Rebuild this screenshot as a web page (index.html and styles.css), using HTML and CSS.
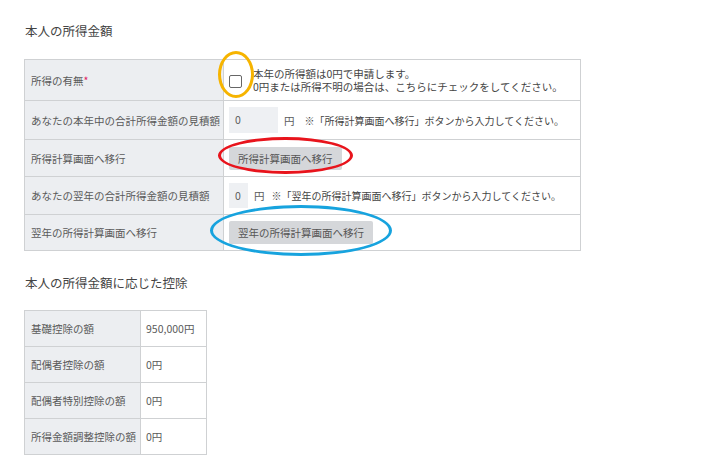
FILE: index.html
```html
<!DOCTYPE html>
<html lang="ja">
<head>
    <meta charset="UTF-8">
    <meta name="viewport" content="width=device-width, initial-scale=1.0">
    <title>本人の所得金額</title>
    <link rel="stylesheet" href="styles.css">
</head>
<body>
    <div class="page">
        <h2 class="section-title">本人の所得金額</h2>
        <table class="form-table income">
            <colgroup>
                <col class="label-col">
                <col>
            </colgroup>
            <tr class="row-check">
                <th>所得の有無<span class="required">*</span></th>
                <td>
                    <div class="check-line">
                        <span class="mark mark-yellow"><input type="checkbox" class="check"></span>
                        <p class="check-text">本年の所得額は0円で申請します。<br>0円または所得不明の場合は、こちらにチェックをしてください。</p>
                    </div>
                </td>
            </tr>
            <tr class="row-input">
                <th>あなたの本年中の合計所得金額の見積額</th>
                <td>
                    <div class="amount-line">
                        <span class="amount wide">0</span>
                        <span class="unit">円</span>
                        <span class="note">※「所得計算画面へ移行」ボタンから入力してください。</span>
                    </div>
                </td>
            </tr>
            <tr class="row-btn">
                <th>所得計算画面へ移行</th>
                <td><span class="mark mark-red"><button class="btn">所得計算画面へ移行</button></span></td>
            </tr>
            <tr class="row-input next">
                <th>あなたの翌年の合計所得金額の見積額</th>
                <td>
                    <div class="amount-line">
                        <span class="amount">0</span>
                        <span class="unit">円</span>
                        <span class="note">※「翌年の所得計算画面へ移行」ボタンから入力してください。</span>
                    </div>
                </td>
            </tr>
            <tr class="row-btn last">
                <th>翌年の所得計算画面へ移行</th>
                <td><span class="mark mark-blue"><button class="btn">翌年の所得計算画面へ移行</button></span></td>
            </tr>
        </table>

        <h2 class="section-title second">本人の所得金額に応じた控除</h2>
        <table class="form-table deduction">
            <colgroup>
                <col class="label-col">
                <col>
            </colgroup>
            <tr><th>基礎控除の額</th><td>950,000円</td></tr>
            <tr><th>配偶者控除の額</th><td>0円</td></tr>
            <tr><th>配偶者特別控除の額</th><td>0円</td></tr>
            <tr><th>所得金額調整控除の額</th><td>0円</td></tr>
        </table>
    </div>
</body>
</html>
```

FILE: styles.css
```css
:root {
    --border-color: #cfd1d3;
    --label-bg: #eceef1;
    --text-color: #5a5a5a;
}

body {
    margin: 0;
    background-color: #fff;
    color: var(--text-color);
    font-family: "Noto Sans CJK JP", "Noto Sans", sans-serif;
    font-size: 10.5px;
}

.page {
    padding: 22px 24px 0;
}

.section-title {
    margin: 0 0 19px 1px;
    font-size: 12.5px;
    font-weight: normal;
    line-height: 18px;
    color: #444;
}
.section-title.second {
    margin-top: 23px;
    margin-bottom: 18px;
}

.form-table {
    border-collapse: collapse;
    table-layout: fixed;
}
.form-table th,
.form-table td {
    border: 1px solid var(--border-color);
    padding: 0 5px;
    text-align: left;
    font-weight: normal;
    vertical-align: middle;
    white-space: nowrap;
    overflow: visible;
}
.form-table th {
    background-color: var(--label-bg);
    padding-left: 6px;
}

.income {
    width: 557px;
}
.income .label-col {
    width: 199px;
}
.row-check th, .row-check td { height: 40px; }
.row-input th, .row-input td { height: 38px; }
.row-input.next th, .row-input.next td { height: 37px; }
.row-btn th, .row-btn td { height: 36px; }
.row-btn.last th, .row-btn.last td { height: 35px; }

.required {
    color: #e0245e;
}

.check-line {
    display: flex;
    align-items: center;
    gap: 11px;
}
.check {
    appearance: none;
    display: block;
    width: 13px;
    height: 13px;
    margin: 3px 0 0 0;
    border: 1.5px solid #666;
    border-radius: 2px;
    background: #fff;
}
.check-text {
    margin: 0;
    line-height: 13px;
    color: #444;
}

.amount-line {
    display: flex;
    align-items: center;
}
.amount {
    display: block;
    width: 43px;
    height: 26px;
    line-height: 26px;
    padding-left: 6px;
    background-color: #eef0f3;
}
.amount:not(.wide) {
    width: 13px;
    height: 25px;
    line-height: 25px;
}
.unit {
    margin-left: 6px;
}
.note {
    margin-left: 10px;
    font-size: 10px;
    color: #444;
}
.next .note { margin-left: 7px; }

.btn {
    display: block;
    height: 23px;
    padding: 0 9px;
    border: none;
    border-radius: 2px;
    background-color: #d5d7da;
    color: #555;
    font-family: inherit;
    font-size: 10.5px;
}

/* hand drawn highlight rings over the controls */
.mark {
    position: relative;
    display: inline-block;
}
.mark::after {
    content: "";
    position: absolute;
    border-radius: 50%;
    border: 3px solid;
    pointer-events: none;
}
.mark-yellow::after {
    left: -11px;
    right: -12px;
    top: -21px;
    bottom: -10px;
    border-color: #f6b400;
}
.mark-red::after {
    left: -11px;
    right: -11px;
    top: -10px;
    bottom: -4px;
    border-color: #e8141c;
}
.mark-blue::after {
    left: -19px;
    right: -19px;
    top: -16px;
    bottom: -12px;
    border-color: #17a3de;
}

.deduction {
    width: 183px;
}
.deduction .label-col {
    width: 116px;
}
.deduction th,
.deduction td {
    height: 35px;
}
```
